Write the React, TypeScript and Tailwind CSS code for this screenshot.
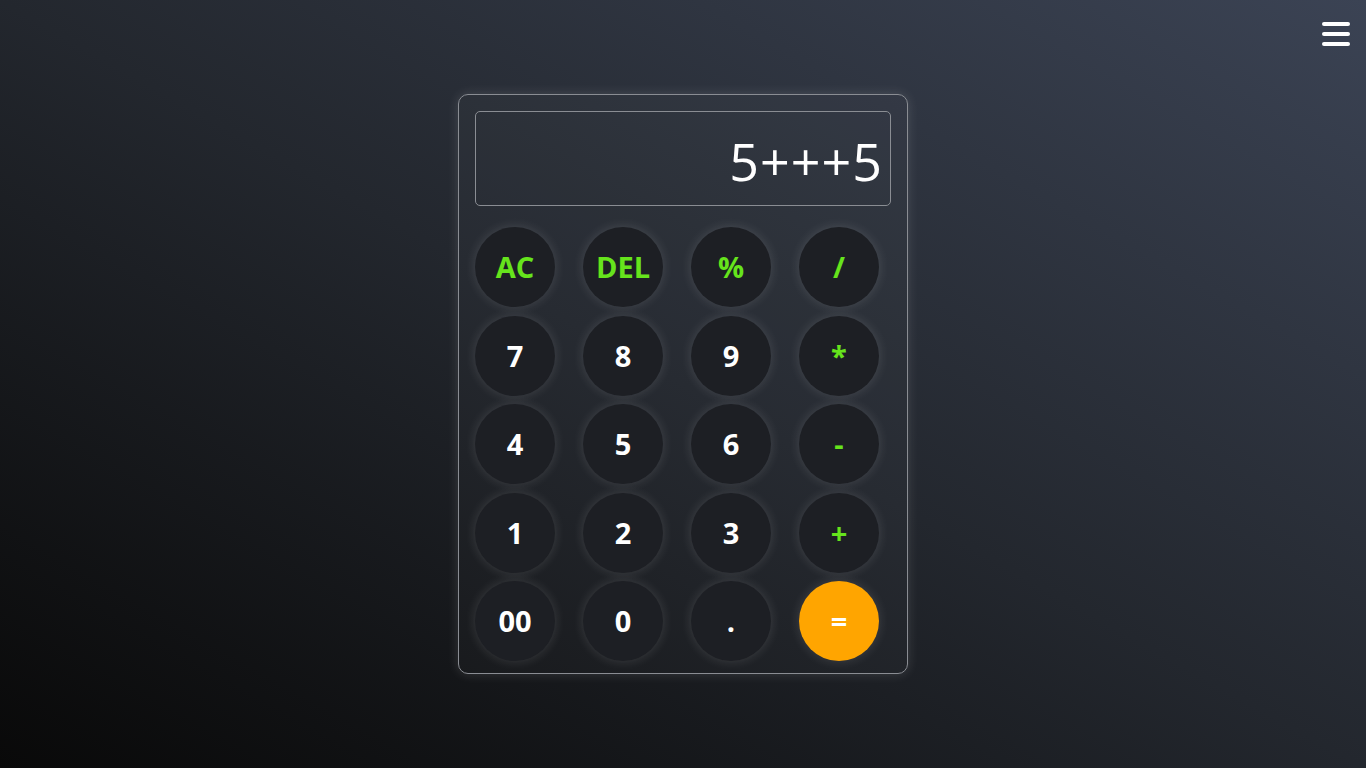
const keys = [
  ['AC', 'DEL', '%', '/'],
  ['7', '8', '9', '*'],
  ['4', '5', '6', '-'],
  ['1', '2', '3', '+'],
  ['00', '0', '.', '='],
];

const ops = ['AC', 'DEL', '%', '/', '*', '-', '+'];

function Key({ label }: { label: string }) {
  const isOp = ops.includes(label);
  const isEq = label === '=';
  return (
    <button
      className={
        isEq
          ? 'w-20 h-20 rounded-full bg-[#ffa500] text-white text-[29px] font-bold flex items-center justify-center shadow-[0_0_12px_rgba(255,255,255,0.14)]'
          : isOp
          ? 'w-20 h-20 rounded-full bg-[#1d1f24] text-[#66e41c] text-[29px] font-bold flex items-center justify-center shadow-[0_0_12px_rgba(255,255,255,0.14)]'
          : 'w-20 h-20 rounded-full bg-[#1d1f24] text-white text-[29px] font-bold flex items-center justify-center shadow-[0_0_12px_rgba(255,255,255,0.14)]'
      }
    >
      {label}
    </button>
  );
}

export default function App() {
  return (
    <div className="relative w-full h-screen bg-gradient-to-tr from-[#090909] via-[#23272e] to-[#3b4354] flex items-center justify-center font-['Open_Sans','Noto_Sans',sans-serif]">
      <button className="absolute top-[22px] right-[16px] w-7 h-6 flex flex-col justify-between">
        <span className="block w-7 h-1 rounded-full bg-white" />
        <span className="block w-7 h-1 rounded-full bg-white" />
        <span className="block w-7 h-1 rounded-full bg-white" />
      </button>

      <div className="w-[450px] h-[580px] rounded-[10px] border border-[#8a8d93] bg-white/[0.02] shadow-[0_0_12px_rgba(255,255,255,0.14)] pt-4 px-4 pb-3 flex flex-col">
        <div className="h-[95px] shrink-0 rounded-[5px] border border-[#8a8d93] flex items-center justify-end pr-[7px]">
          <span className="text-white text-[52px] leading-none tracking-[1px] mt-[4px]">5+++5</span>
        </div>
        <div className="mt-[21px] grid grid-cols-[repeat(4,80px)] gap-x-7 gap-y-[8.5px]">
          {keys.flat().map((k) => (
            <Key key={k} label={k} />
          ))}
        </div>
      </div>
    </div>
  );
}
